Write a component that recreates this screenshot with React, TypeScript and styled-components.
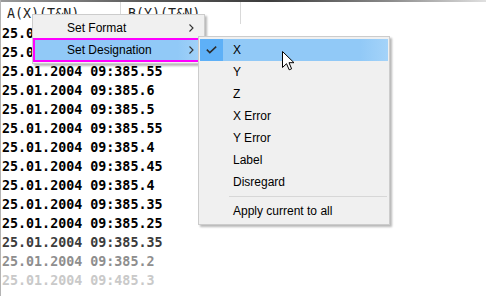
import React from 'react';
import styled, { createGlobalStyle } from 'styled-components';

const GlobalStyle = createGlobalStyle`
  html, body {
    margin: 0;
    padding: 0;
    background: #ffffff;
  }
`;

const MONO = `'DejaVu Sans Mono', 'Liberation Mono', monospace`;
const UI = `'Liberation Sans', 'Noto Sans', sans-serif`;

const Page = styled.div`
  position: relative;
  width: 486px;
  height: 296px;
  overflow: hidden;
  background: #ffffff;
  border-left: 1px solid #b4b4b4;
  box-sizing: border-box;
`;

const TopRule = styled.div`
  height: 2px;
  background: linear-gradient(to right, #9a9a9a, #5a5a5a 30%, #3c3c3c 55%, #8a8a8a 80%, #e0e0e0);
`;

const HeaderRow = styled.div`
  display: grid;
  grid-template-columns: 120px 120px;
  height: 22px;
`;

const HeaderCell = styled.div`
  border-right: 1px solid #d9d9d9;
  padding-left: 6px;
  display: flex;
  align-items: center;
  font-family: ${MONO};
  font-size: 13.33px;
  color: #1e1e1e;
  white-space: nowrap;
  overflow: visible;
`;

const DataList = styled.div`
  display: flex;
  flex-direction: column;
`;

const DataRow = styled.div<{ $tone: string }>`
  height: 19px;
  display: flex;
  align-items: center;
  padding-left: 1px;
  font-family: ${MONO};
  font-weight: bold;
  font-size: 13.33px;
  color: ${p => p.$tone};
  white-space: pre;
`;

const Menu = styled.div<{ $left: number; $top: number; $width: number }>`
  position: absolute;
  left: ${p => p.$left}px;
  top: ${p => p.$top}px;
  width: ${p => p.$width}px;
  box-sizing: border-box;
  background: #f0f0f0;
  border: 1px solid #cccccc;
  padding: 2px 1px;
  box-shadow: 2px 2px 2px rgba(0, 0, 0, 0.28);
  font-family: ${UI};
  font-size: 12px;
  color: #000000;
`;

const Item = styled.div<{ $active?: boolean; $marked?: boolean }>`
  position: relative;
  display: flex;
  align-items: center;
  height: 22px;
  background: ${p => (p.$active ? 'linear-gradient(to right, #91c9f7 85%, #a4d3f9)' : 'transparent')};
  outline: ${p => (p.$marked ? '2px solid #ff00ff' : 'none')};
  outline-offset: -1px;
`;

const CheckCell = styled.div<{ $on?: boolean }>`
  width: 23px;
  height: 100%;
  display: flex;
  align-items: center;
  justify-content: center;
  background: ${p => (p.$on ? '#5eb0f7' : 'transparent')};
`;

const Label = styled.span`
  flex: 1;
  padding-left: 10px;
  white-space: nowrap;
`;

const Chevron = styled.svg`
  margin-right: 9px;
`;

const Separator = styled.div`
  height: 1px;
  margin: 3px 1px 3px 29px;
  background: #d7d7d7;
`;

const Pointer = styled.svg`
  position: absolute;
  left: 281px;
  top: 51px;
`;

const rows: [string, string][] = [
  ['25.01.2004 09:385.6', '#000'],
  ['25.01.2004 09:385.6', '#000'],
  ['25.01.2004 09:385.55', '#000'],
  ['25.01.2004 09:385.6', '#000'],
  ['25.01.2004 09:385.5', '#000'],
  ['25.01.2004 09:385.55', '#000'],
  ['25.01.2004 09:385.4', '#000'],
  ['25.01.2004 09:385.45', '#000'],
  ['25.01.2004 09:385.4', '#000'],
  ['25.01.2004 09:385.35', '#000'],
  ['25.01.2004 09:385.25', '#000'],
  ['25.01.2004 09:385.35', '#3c3c3c'],
  ['25.01.2004 09:385.2', '#8e8e8e'],
  ['25.01.2004 09:485.3', '#c9c9c9'],
];

const designations = ['X', 'Y', 'Z', 'X Error', 'Y Error', 'Label', 'Disregard'];

const Arrow = () => (
  <Chevron width="5" height="8" viewBox="0 0 5 8">
    <path d="M0.5 0.5 L4 4 L0.5 7.5" fill="none" stroke="#333" strokeWidth="1.1" />
  </Chevron>
);

const Check = () => (
  <svg width="11" height="8" viewBox="0 0 11 8">
    <path d="M0.8 3.6 L3.8 6.6 L10.2 0.6" fill="none" stroke="#2b2b2b" strokeWidth="1.5" />
  </svg>
);

export default function App() {
  return (
    <Page>
      <GlobalStyle />
      <TopRule />
      <HeaderRow>
        <HeaderCell>A(X)(T&amp;N)</HeaderCell>
        <HeaderCell style={{ paddingLeft: 7 }}>B(Y)(T&amp;N)</HeaderCell>
      </HeaderRow>
      <DataList>
        {rows.map(([text, tone], i) => (
          <DataRow key={i} $tone={tone}>
            {text}
          </DataRow>
        ))}
      </DataList>

      <Menu $left={31} $top={14} $width={173}>
        <Item>
          <CheckCell />
          <Label>Set Format</Label>
          <Arrow />
        </Item>
        <Item $active $marked>
          <CheckCell />
          <Label>Set Designation</Label>
          <Arrow />
        </Item>
      </Menu>

      <Menu $left={197} $top={36} $width={192}>
        {designations.map((d, i) => (
          <Item key={d} $active={i === 0}>
            <CheckCell $on={i === 0}>{i === 0 && <Check />}</CheckCell>
            <Label>{d}</Label>
          </Item>
        ))}
        <Separator />
        <Item>
          <CheckCell />
          <Label>Apply current to all</Label>
        </Item>
      </Menu>

      <Pointer width="13" height="20" viewBox="0 0 13 20">
        <path
          d="M0.5 0.5 L0.5 16.5 L4.5 12.7 L7.2 18.8 L9.6 17.8 L7 11.7 L12 11.7 Z"
          fill="#fff"
          stroke="#000"
          strokeWidth="1"
          strokeLinejoin="miter"
        />
      </Pointer>
    </Page>
  );
}
